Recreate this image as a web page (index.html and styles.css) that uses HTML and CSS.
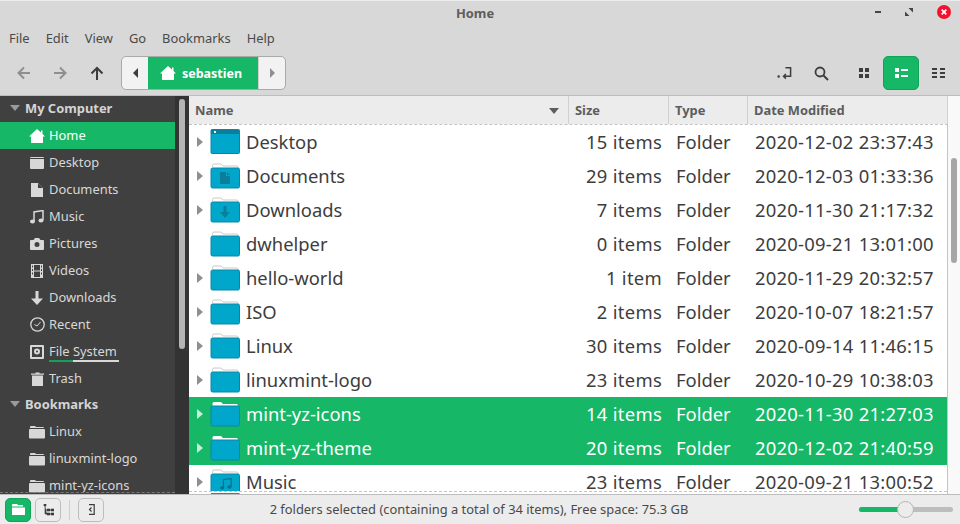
FILE: index.html
```html
<!DOCTYPE html>
<html>
<head>
  <meta charset="UTF-8">
  <title>Home</title>
  <link rel="stylesheet" href="styles.css">
</head>
<body>
  <svg class="defs" width="0" height="0">
    <symbol id="folder" viewBox="0 0 30 26">
      <path d="M2.500 4V2.500Q2.500 1 4 1H11L13 3H26.500Q28 3 28 4.500V6" fill="#fff" stroke="#c9c9c9"/>
      <path d="M1 6.500Q1 5 2.500 5H28Q29.500 5 29.500 6.500V23.500Q29.500 25 28 25H2.500Q1 25 1 23.500Z" fill="#00a7cb" stroke="#0a87a5"/>
    </symbol>
    <symbol id="folder-sel" viewBox="0 0 30 26">
      <path d="M2.500 5V2.500Q2.500 1 4 1H11L13 3H26.500Q28 3 28 4.500V6Z" fill="#fff"/>
      <path d="M1 6.500Q1 5 2.500 5H28Q29.500 5 29.500 6.500V23.500Q29.500 25 28 25H2.500Q1 25 1 23.500Z" fill="#00a7cb" stroke="#0a87a5"/>
    </symbol>
    <symbol id="side-folder" viewBox="0 0 16 14">
      <path d="M1 3V2Q1 1 2 1H6L7 2H14Q15 2 15 3Z" fill="#d8d8d8"/>
      <path d="M0 5Q0 4 1 4H15Q16 4 16 5V12.500Q16 13.500 15 13.500H1Q0 13.500 0 12.500Z" fill="#d8d8d8"/>
    </symbol>
    <symbol id="home" viewBox="0 0 16 16">
      <path d="M8 1L12 4.500V2.500H13.500V6L16 8.500H14V15H2V8.500H0Z" fill="#fff"/>
    </symbol>
  </svg>

  <div class="window">
    <div class="titlebar">
      <span class="title">Home</span>
      <div class="winbtns">
        <span class="min"></span>
        <svg width="8" height="8" viewBox="0 0 8 8"><path d="M3.500 0H8V4.500ZM4.500 8H0V3.500Z" fill="#444"/></svg>
        <span class="close">
          <svg width="6" height="6" viewBox="0 0 6 6"><path d="M0.700 0.700L5.300 5.300M5.300 0.700L0.700 5.300" stroke="#fff" stroke-width="1.700"/></svg>
        </span>
      </div>
    </div>

    <div class="menubar">
      <span>File</span><span>Edit</span><span>View</span><span>Go</span><span>Bookmarks</span><span>Help</span>
    </div>

    <div class="toolbar">
      <div class="nav">
        <svg width="16" height="14" viewBox="0 0 16 14"><path d="M14 7H3M8 1.500L2.500 7L8 12.500" fill="none" stroke="#8f8f8f" stroke-width="2"/></svg>
        <svg width="16" height="14" viewBox="0 0 16 14"><path d="M2 7H13M8 1.500L13.500 7L8 12.500" fill="none" stroke="#8f8f8f" stroke-width="2"/></svg>
        <svg class="nav-up" width="14" height="14" viewBox="0 0 14 14"><path d="M7 14V2M1.500 7.500L7 2L12.500 7.500" fill="none" stroke="#3d3d3d" stroke-width="2"/></svg>
      </div>
      <div class="path">
        <span class="path-end"><svg width="5" height="10" viewBox="0 0 5 10"><path d="M5 0V10L0 5Z" fill="#3d3d3d"/></svg></span>
        <span class="crumb"><svg width="16" height="16"><use href="#home"/></svg>sebastien</span>
        <span class="path-end right"><svg width="5" height="10" viewBox="0 0 5 10"><path d="M0 0V10L5 5Z" fill="#8f8f8f"/></svg></span>
      </div>
      <div class="tools">
        <svg class="tool-jump" width="15" height="14" viewBox="0 0 16 14"><path d="M9 1.500H14.500V10.500H7M9.500 8L7 10.500L9.500 13" fill="none" stroke="#3d3d3d" stroke-width="1.600"/><rect x="0.500" y="9.500" width="2.500" height="2.500" rx="1" fill="#3d3d3d"/></svg>
        <svg class="tool-search" width="15" height="15" viewBox="0 0 15 15"><circle cx="6" cy="6" r="4.500" fill="none" stroke="#3d3d3d" stroke-width="1.800"/><path d="M9.500 9.500L14 14" stroke="#3d3d3d" stroke-width="2"/></svg>
        <svg class="tool-icons" width="10" height="10" viewBox="0 0 10 10"><path d="M0 0H4V4H0ZM6 0H10V4H6ZM0 6H4V10H0ZM6 6H10V10H6Z" fill="#3d3d3d"/></svg>
        <span class="view-on"><svg width="13" height="10" viewBox="0 0 13 10"><path d="M0 0H4V4H0ZM0 6H4V10H0ZM6 1H13V3H6ZM6 7H13V9H6Z" fill="#fff"/></svg></span>
        <svg width="13" height="10" viewBox="0 0 13 10"><path d="M0 0H5V2H0ZM0 4H5V6H0ZM0 8H5V10H0ZM8 0H13V2H8ZM8 4H13V6H8ZM8 8H13V10H8Z" fill="#3d3d3d"/></svg>
      </div>
    </div>

    <div class="content">
      <div class="sidebar">
        <div class="side-list">
          <div class="side-head"><i class="tri"></i>My Computer</div>
          <div class="side-item active"><svg width="16" height="16"><use href="#home"/></svg>Home</div>
          <div class="side-item"><svg width="14" height="12" viewBox="0 0 14 12"><path d="M0 1Q0 0 1 0H13Q14 0 14 1V11Q14 12 13 12H1Q0 12 0 11Z" fill="#d8d8d8"/><path d="M0 1.500H14" stroke="#404040"/></svg>Desktop</div>
          <div class="side-item"><svg width="12" height="14" viewBox="0 0 12 14"><path d="M0 0H7L12 5V14H0Z" fill="#d8d8d8"/><path d="M7 0V5H12" fill="#404040"/></svg>Documents</div>
          <div class="side-item"><svg width="14" height="14" viewBox="0 0 14 14"><path d="M4 11V2L13 0.500V10" fill="none" stroke="#d8d8d8" stroke-width="1.500"/><ellipse cx="2.500" cy="11.500" rx="2.500" ry="2" fill="#d8d8d8"/><ellipse cx="11" cy="10.500" rx="2.500" ry="2" fill="#d8d8d8"/></svg>Music</div>
          <div class="side-item"><svg width="14" height="12" viewBox="0 0 14 12"><path fill-rule="evenodd" d="M0 3Q0 2 1 2H3.500L5 0H9L10.500 2H13Q14 2 14 3V11Q14 12 13 12H1Q0 12 0 11ZM7 4A2.500 2.500 0 1 0 7 9A2.500 2.500 0 1 0 7 4Z" fill="#d8d8d8"/></svg>Pictures</div>
          <div class="side-item"><svg width="12" height="14" viewBox="0 0 12 14"><path fill-rule="evenodd" d="M0 0H12V14H0ZM3 1H9V6.500H3ZM3 7.500H9V13H3ZM1 1.500H2V3.500H1ZM10 1.500H11V3.500H10ZM1 5H2V7H1ZM10 5H11V7H10ZM1 8.500H2V10.500H1ZM10 8.500H11V10.500H10Z" fill="#d8d8d8"/></svg>Videos</div>
          <div class="side-item"><svg width="12" height="14" viewBox="0 0 12 14"><path d="M4.500 0H7.500V7.500H12L6 14L0 7.500H4.500Z" fill="#d8d8d8"/></svg>Downloads</div>
          <div class="side-item"><svg width="15" height="15" viewBox="0 0 15 15"><circle cx="7.500" cy="7.500" r="6.700" fill="none" stroke="#d8d8d8" stroke-width="1.300"/><path d="M4.500 7.500L7 9L10.500 5" fill="none" stroke="#d8d8d8"/></svg>Recent</div>
          <div class="side-item"><svg width="14" height="14" viewBox="0 0 14 14"><path fill-rule="evenodd" d="M0 1Q0 0 1 0H13Q14 0 14 1V13Q14 14 13 14H1Q0 14 0 13ZM2 2V12H12V2ZM7 3.500A3 3 0 1 1 7 9.500A3 3 0 1 1 7 3.500ZM7 5.500A1 1 0 1 0 7 7.500A1 1 0 1 0 7 5.500Z" fill="#d8d8d8"/></svg><span class="usage">File System</span></div>
          <div class="side-item"><svg width="13" height="14" viewBox="0 0 13 14"><path d="M1 3.500H12V14H1ZM0 1.500H4.500V0.500H8.500V1.500H13V2.800H0Z" fill="#d8d8d8"/></svg>Trash</div>
          <div class="side-head"><i class="tri"></i>Bookmarks</div>
          <div class="side-item"><svg width="16" height="14"><use href="#side-folder"/></svg>Linux</div>
          <div class="side-item"><svg width="16" height="14"><use href="#side-folder"/></svg>linuxmint-logo</div>
          <div class="side-item"><svg width="16" height="14"><use href="#side-folder"/></svg>mint-yz-icons</div>
        </div>
        <div class="side-scroll"><div class="side-thumb"></div></div>
      </div>

      <div class="files">
        <div class="file-main">
          <div class="columns">
            <div class="col col-name">Name<i class="sort"></i></div>
            <div class="col">Size</div>
            <div class="col">Type</div>
            <div class="col">Date Modified</div>
          </div>
          <div class="rows">
            <div class="row">
              <i class="exp"></i>
              <svg class="ficon" width="30" height="26" viewBox="0 0 30 26"><path d="M1 1.500Q1 0.500 2 0.500H28.500Q29.500 0.500 29.500 1.500V23.500Q29.500 24.500 28.500 24.500H2Q1 24.500 1 23.500Z" fill="#00a7cb" stroke="#0a87a5"/><rect x="1" y="1" width="28" height="4" fill="#0a7f9c"/><rect x="4" y="2" width="2" height="2" fill="#fff"/></svg>
              <span class="name">Desktop</span><span class="size">15 items</span><span class="type">Folder</span><span class="date">2020-12-02 23:37:43</span>
            </div>
            <div class="row">
              <i class="exp"></i>
              <span class="ficon"><svg width="30" height="26"><use href="#folder"/></svg><svg class="emblem" width="10" height="12" viewBox="0 0 10 12"><path d="M0 0H6V4H10V12H0ZM7 0L10 3H7Z" fill="#0a7f9c"/></svg></span>
              <span class="name">Documents</span><span class="size">29 items</span><span class="type">Folder</span><span class="date">2020-12-03 01:33:36</span>
            </div>
            <div class="row">
              <i class="exp"></i>
              <span class="ficon"><svg width="30" height="26"><use href="#folder"/></svg><svg class="emblem" width="10" height="12" viewBox="0 0 10 12"><path d="M3.500 0H6.500V6H10L5 12L0 6H3.500Z" fill="#0a7f9c"/></svg></span>
              <span class="name">Downloads</span><span class="size">7 items</span><span class="type">Folder</span><span class="date">2020-11-30 21:17:32</span>
            </div>
            <div class="row">
              <span class="exp-none"></span>
              <svg class="ficon" width="30" height="26"><use href="#folder"/></svg>
              <span class="name">dwhelper</span><span class="size">0 items</span><span class="type">Folder</span><span class="date">2020-09-21 13:01:00</span>
            </div>
            <div class="row">
              <i class="exp"></i>
              <svg class="ficon" width="30" height="26"><use href="#folder"/></svg>
              <span class="name">hello-world</span><span class="size">1 item</span><span class="type">Folder</span><span class="date">2020-11-29 20:32:57</span>
            </div>
            <div class="row">
              <i class="exp"></i>
              <svg class="ficon" width="30" height="26"><use href="#folder"/></svg>
              <span class="name">ISO</span><span class="size">2 items</span><span class="type">Folder</span><span class="date">2020-10-07 18:21:57</span>
            </div>
            <div class="row">
              <i class="exp"></i>
              <svg class="ficon" width="30" height="26"><use href="#folder"/></svg>
              <span class="name">Linux</span><span class="size">30 items</span><span class="type">Folder</span><span class="date">2020-09-14 11:46:15</span>
            </div>
            <div class="row">
              <i class="exp"></i>
              <svg class="ficon" width="30" height="26"><use href="#folder"/></svg>
              <span class="name">linuxmint-logo</span><span class="size">23 items</span><span class="type">Folder</span><span class="date">2020-10-29 10:38:03</span>
            </div>
            <div class="row selected">
              <i class="exp"></i>
              <svg class="ficon" width="30" height="26"><use href="#folder-sel"/></svg>
              <span class="name">mint-yz-icons</span><span class="size">14 items</span><span class="type">Folder</span><span class="date">2020-11-30 21:27:03</span>
            </div>
            <div class="row selected">
              <i class="exp"></i>
              <svg class="ficon" width="30" height="26"><use href="#folder-sel"/></svg>
              <span class="name">mint-yz-theme</span><span class="size">20 items</span><span class="type">Folder</span><span class="date">2020-12-02 21:40:59</span>
            </div>
            <div class="row">
              <i class="exp"></i>
              <span class="ficon"><svg width="30" height="26"><use href="#folder"/></svg><svg class="emblem" width="12" height="12" viewBox="0 0 14 14"><path d="M4 11V2L13 0.500V10" fill="none" stroke="#0a6f88" stroke-width="1.500"/><ellipse cx="2.500" cy="11.500" rx="2.500" ry="2" fill="#0a6f88"/><ellipse cx="11" cy="10.500" rx="2.500" ry="2" fill="#0a6f88"/></svg></span>
              <span class="name">Music</span><span class="size">23 items</span><span class="type">Folder</span><span class="date">2020-09-21 13:00:52</span>
            </div>
          </div>
        </div>
        <div class="file-scroll"><div class="file-thumb"></div></div>
      </div>
    </div>

    <div class="statusbar">
      <div class="side-btns">
        <span class="sbtn on"><svg width="13" height="11" viewBox="0 0 13 11"><path d="M0 1Q0 0 1 0H5L6 1H11V2.500H0ZM0 3.500H13V11H0Z" fill="#fff"/></svg></span>
        <span class="sbtn"><svg width="11" height="12" viewBox="0 0 11 12"><path d="M1 0H3V2H1ZM2 2V10H4M2 6H4M4 5H7V7H4ZM4 9H7V11H4ZM8 5H11V7H8ZM8 9H11V11H8Z" fill="#3d3d3d" stroke="#3d3d3d" stroke-width="0.600"/></svg></span>
        <span class="sep"></span>
        <span class="sbtn"><svg width="8" height="11" viewBox="0 0 8 11"><path d="M2 0.700H7.200V10.300H2M4.500 3.500L2.500 5.500L4.500 7.500" fill="none" stroke="#3d3d3d" stroke-width="1.200"/></svg></span>
      </div>
      <div class="status-text">2 folders selected (containing a total of 34 items), Free space: 75.3 GB</div>
      <div class="zoom"><div class="zoom-fill"></div><div class="zoom-knob"></div></div>
    </div>
  </div>
</body>
</html>
```
FILE: styles.css
```css
body {
  margin: 0;
  font-family: "Noto Sans", sans-serif;
  color: #3d3d3d;
  background: #d8d8d8;
  overflow: hidden;
}
.defs { display: block; height: 0; }
.window {
  width: 960px;
  height: 524px;
  display: flex;
  flex-direction: column;
  overflow: hidden;
}
/* Title bar */
.titlebar {
  height: 27px;
  flex: none;
  box-sizing: border-box;
  border-top: 1px solid #ececec;
  padding: 0 10px 3px 0;
  display: flex;
  align-items: center;
  justify-content: center;
  position: relative;
  background: #d8d8d8;
}
.title {
  font-size: 12.900px;
  font-weight: 700;
  color: #5d5d5d;
}
.winbtns {
  position: absolute;
  right: 9px;
  top: 4px;
  display: flex;
  align-items: center;
  gap: 24px;
}
.min { width: 6px; height: 2px; background: #444; }
.close {
  width: 14px;
  height: 14px;
  border-radius: 50%;
  background: #f3112e;
  display: flex;
  align-items: center;
  justify-content: center;
}
/* Menu */
.menubar {
  height: 23px;
  flex: none;
  box-sizing: border-box;
  display: flex;
  align-items: center;
  gap: 16px;
  padding: 0 9px 2px;
  font-size: 12.900px;
  color: #4a4a4a;
}
/* Toolbar */
.toolbar {
  height: 45px;
  flex: none;
  box-sizing: border-box;
  display: flex;
  align-items: center;
  padding-top: 1px;
}
.nav {
  width: 121px;
  display: flex;
  align-items: center;
  padding-left: 16px;
  gap: 20px;
  box-sizing: border-box;
}
.nav-up { margin-left: 2px; }
.path {
  display: flex;
  height: 34px;
  box-sizing: border-box;
  border: 1px solid #a9a9a9;
  border-radius: 5px;
  background: #f2f2f2;
  overflow: hidden;
}
.path-end {
  width: 26px;
  display: flex;
  align-items: center;
  justify-content: center;
}
.path-end.right { border-left: 1px solid #d0d0d0; }
.crumb {
  width: 110px;
  box-sizing: border-box;
  padding-right: 4px;
  background: #16b766;
  color: #fff;
  font-size: 12.500px;
  font-weight: 700;
  display: flex;
  align-items: center;
  justify-content: center;
  gap: 6px;
}
.tools {
  margin-left: auto;
  display: flex;
  align-items: center;
  padding-right: 15px;
}
.tool-jump { margin-right: 22px; }
.tool-search { margin-right: 30px; }
.tool-icons { margin-right: 14px; }
.view-on {
  width: 36px;
  height: 34px;
  border-radius: 5px;
  background: #16b766;
  border: 1px solid #12a35a;
  box-sizing: border-box;
  display: flex;
  align-items: center;
  justify-content: center;
  margin-right: 13px;
}
/* Content panes */
.content {
  flex: 1;
  min-height: 0;
  display: flex;
  border-top: 1px solid #bdbdbd;
}
.sidebar {
  width: 189px;
  flex: none;
  display: flex;
  background: #404040;
  overflow: hidden;
}
.side-list {
  width: 175px;
  flex: none;
  position: relative;
  overflow: hidden;
}
.side-list::after {
  content: "";
  position: absolute;
  left: 0;
  right: 0;
  bottom: 1px;
  border-top: 1px dashed #777;
}
.side-head {
  height: 26px;
  box-sizing: border-box;
  padding-bottom: 2px;
  display: flex;
  align-items: center;
  font-size: 12.900px;
  font-weight: 700;
  color: #d4d4d4;
}
.tri {
  width: 0;
  height: 0;
  margin: 0 5px 0 10px;
  border-left: 5px solid transparent;
  border-right: 5px solid transparent;
  border-top: 6px solid #9a9a9a;
}
.side-item {
  height: 27px;
  box-sizing: border-box;
  display: grid;
  grid-template-columns: 16px 1fr;
  gap: 4px;
  align-items: center;
  justify-items: start;
  padding: 0 0 2px 29px;
  font-size: 12.900px;
  color: #d8d8d8;
}
.side-item svg { justify-self: center; margin-top: 2px; }
.side-item.active { background: #16b766; color: #fff; }
.usage {
  padding-right: 2px;
  border-bottom: 2px solid;
  border-image: linear-gradient(to right, #16a05a 35%, #d8d8d8 35%) 1;
  margin-bottom: -3px;
}
.side-scroll {
  flex: 1;
  background: #333;
  padding: 3px 0 0 4px;
}
.side-thumb {
  width: 6px;
  height: 250px;
  border-radius: 3px;
  background: #b4b4b4;
}
/* File list */
.files {
  flex: 1;
  min-width: 0;
  display: flex;
  background: #fff;
}
.file-main { width: 759px; flex: none; }
.columns {
  height: 28px;
  box-sizing: border-box;
  display: grid;
  grid-template-columns: 380px 100px 79px 200px;
  background: #ececec;
  font-size: 12.900px;
  font-weight: 700;
  color: #5d5d5d;
}
.col {
  display: flex;
  align-items: center;
  padding-left: 6px;
  border-right: 1px solid #d0d0d0;
  position: relative;
}
.sort {
  position: absolute;
  right: 9px;
  top: 12px;
  width: 0;
  height: 0;
  border-left: 5px solid transparent;
  border-right: 5px solid transparent;
  border-top: 6px solid #5d5d5d;
}
.rows {
  height: 370px;
  box-sizing: border-box;
  position: relative;
  overflow: hidden;
  border-top: 1px dashed #c4c4c4;
  border-right: 1px solid #c4c4c4;
}
.rows::after {
  content: "";
  position: absolute;
  left: 0;
  right: 0;
  bottom: 1px;
  border-top: 1px dashed #c4c4c4;
  background: #fff;
  height: 1px;
}
.row {
  height: 34px;
  flex: none;
  display: grid;
  grid-template-columns: 21px 36px 323px 93px 86px 1fr;
  align-items: center;
  font-size: 18.400px;
  color: #3d3d3d;
}
.exp {
  width: 0;
  height: 0;
  margin-left: 8px;
  border-top: 5px solid transparent;
  border-bottom: 5px solid transparent;
  border-left: 6px solid #8f8f8f;
}
.ficon { position: relative; display: block; width: 30px; height: 26px; }
.emblem { position: absolute; left: 10px; top: 9px; }
.name, .size, .type, .date { padding-bottom: 2px; }
.size { text-align: right; letter-spacing: 0.300px; }
.type { padding-left: 14px; }
.date { padding-left: 7px; white-space: nowrap; letter-spacing: 0.260px; }
.row.selected { background: #16b766; color: #fff; }
.row.selected .exp { border-left-color: #c8efd9; }
.file-scroll {
  flex: 1;
  background: #f9f9f9;
  padding: 62px 0 0 3px;
}
.file-thumb {
  width: 6px;
  height: 105px;
  border-radius: 3px;
  background: #a6a6a6;
}
/* Status bar */
.statusbar {
  height: 30px;
  flex: none;
  box-sizing: border-box;
  border-top: 1px solid #bdbdbd;
  background: #ececec;
  display: flex;
  align-items: center;
  font-size: 12.900px;
  color: #4a4a4a;
}
.side-btns {
  display: flex;
  align-items: center;
  gap: 4px;
  padding-left: 5px;
  width: 110px;
  flex: none;
  box-sizing: border-box;
}
.sbtn {
  width: 26px;
  height: 24px;
  box-sizing: border-box;
  border: 1px solid #bdbdbd;
  border-radius: 5px;
  display: flex;
  align-items: center;
  justify-content: center;
}
.sbtn.on { background: #16b766; border-color: #12a35a; }
.sep { width: 1px; height: 20px; background: #cfcfcf; margin: 0 4px; }
.status-text { flex: 1; text-align: center; white-space: nowrap; padding-bottom: 1px; }
.zoom {
  position: relative;
  flex: none;
  margin: 0 7px 0 11px;
  width: 94px;
  height: 5px;
  border-radius: 3px;
  background: #bdbdbd;
}
.zoom-fill { width: 48px; height: 5px; border-radius: 3px; background: #16b766; }
.zoom-knob {
  position: absolute;
  left: 38px;
  top: -6px;
  width: 17px;
  height: 17px;
  box-sizing: border-box;
  border-radius: 50%;
  background: #ececec;
  border: 1px solid #b5b5b5;
}
```
